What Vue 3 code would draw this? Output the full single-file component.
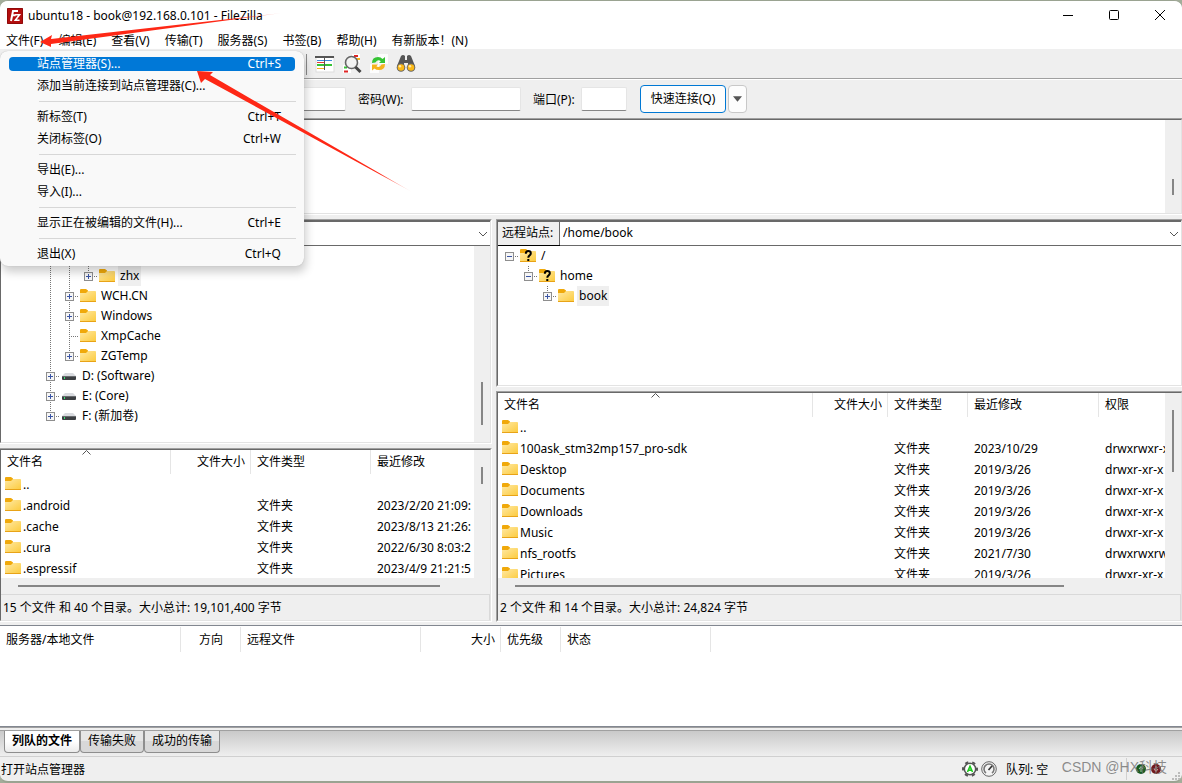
<script setup>
import { ref } from 'vue'

const menus = ['文件(F)', '编辑(E)', '查看(V)', '传输(T)', '服务器(S)', '书签(B)', '帮助(H)', '有新版本！(N)']

const fileMenu = [
  { label: '站点管理器(S)...', key: 'Ctrl+S', active: true },
  { label: '添加当前连接到站点管理器(C)...' },
  { sep: true },
  { label: '新标签(T)', key: 'Ctrl+T' },
  { label: '关闭标签(O)', key: 'Ctrl+W' },
  { sep: true },
  { label: '导出(E)...' },
  { label: '导入(I)...' },
  { sep: true },
  { label: '显示正在被编辑的文件(H)...', key: 'Ctrl+E' },
  { sep: true },
  { label: '退出(X)', key: 'Ctrl+Q' },
]

// Each guide cell: '' empty, 'line' passes through, 'up' ends here, 'both' continues, 'start' has nothing above
const localTree = [
  { name: 'zhx', icon: 'folder', box: '+', cells: ['', '', 'line', 'line', 'up'], selected: true },
  { name: 'WCH.CN', icon: 'folder', box: '+', cells: ['', '', 'line', 'both'] },
  { name: 'Windows', icon: 'folder', box: '+', cells: ['', '', 'line', 'both'] },
  { name: 'XmpCache', icon: 'folder', box: '', cells: ['', '', 'line', 'both'] },
  { name: 'ZGTemp', icon: 'folder', box: '+', cells: ['', '', 'line', 'up'] },
  { name: 'D: (Software)', icon: 'drive', box: '+', cells: ['', '', 'both'] },
  { name: 'E: (Core)', icon: 'drive', box: '+', cells: ['', '', 'both'] },
  { name: 'F: (新加卷)', icon: 'drive', box: '+', cells: ['', '', 'up'] },
]
const remoteTree = [
  { name: '/', icon: 'unknown', box: '-', cells: ['start'] },
  { name: 'home', icon: 'unknown', box: '-', cells: ['', 'up'] },
  { name: 'book', icon: 'folder', box: '+', cells: ['', '', 'up'], selected: true },
]
const trees = { local: localTree, remote: remoteTree }

const localFiles = [
  ['..', '', '', ''],
  ['.android', '', '文件夹', '2023/2/20 21:09:'],
  ['.cache', '', '文件夹', '2023/8/13 21:26:'],
  ['.cura', '', '文件夹', '2022/6/30 8:03:2'],
  ['.espressif', '', '文件夹', '2023/4/9 21:21:5'],
]
const remoteFiles = [
  ['..', '', '', '', ''],
  ['100ask_stm32mp157_pro-sdk', '', '文件夹', '2023/10/29', 'drwxrwxr-x'],
  ['Desktop', '', '文件夹', '2019/3/26', 'drwxr-xr-x'],
  ['Documents', '', '文件夹', '2019/3/26', 'drwxr-xr-x'],
  ['Downloads', '', '文件夹', '2019/3/26', 'drwxr-xr-x'],
  ['Music', '', '文件夹', '2019/3/26', 'drwxr-xr-x'],
  ['nfs_rootfs', '', '文件夹', '2021/7/30', 'drwxrwxrw'],
  ['Pictures', '', '文件夹', '2019/3/26', 'drwxr-xr-x'],
]

const sides = [
  {
    id: 'local', label: '', path: '', aria: '本地站点', files: localFiles,
    heads: ['文件名', '文件大小', '文件类型', '最近修改'],
    status: '15 个文件 和 40 个目录。大小总计: 19,101,400 字节',
  },
  {
    id: 'remote', label: '远程站点:', path: '/home/book', aria: '远程站点', files: remoteFiles,
    heads: ['文件名', '文件大小', '文件类型', '最近修改', '权限'],
    status: '2 个文件 和 14 个目录。大小总计: 24,824 字节',
  },
]

const queueHeads = ['服务器/本地文件', '方向', '远程文件', '大小', '优先级', '状态']
const tabs = ['列队的文件', '传输失败', '成功的传输']
const tab = ref(0)
const user = ref('')
const password = ref('')
const port = ref('')
</script>

<template>
  <div class="window" lang="zh-CN">
    <svg class="defs" aria-hidden="true">
      <defs>
        <linearGradient id="fold" x1="0" y1="0" x2="1" y2="1">
          <stop offset="0" stop-color="#ffe9a4" />
          <stop offset="1" stop-color="#fccb3f" />
        </linearGradient>
        <symbol id="folder" viewBox="0 0 16 16">
          <path d="M0 3V2.2Q0 1 1 1H6L8 2.6V5H0Z" fill="#f0a90b" />
          <path d="M0 5H6L8 3H15.2Q16 3 16 4V13.2H0Z" fill="url(#fold)" />
          <path d="M0 13H16V14H0Z" fill="#e8a317" />
        </symbol>
        <symbol id="unknown" viewBox="0 0 16 16">
          <use href="#folder" />
          <path d="M5.8 5.8Q5.8 3 8.3 3Q10.8 3 10.8 5.3Q10.8 6.7 9.4 7.6Q8.3 8.4 8.3 9.7M8.3 11V13" fill="none" stroke="#000" stroke-width="2" />
        </symbol>
        <symbol id="drive" viewBox="0 0 16 16">
          <path d="M4 5H12L15 8H1Z" fill="#d9dbdf" />
          <rect x="1" y="8" width="14" height="4" rx="1" fill="#3c3f42" />
          <rect x="1" y="8" width="14" height="1" fill="#686b6e" />
          <rect x="3" y="9" width="1" height="2" fill="#39df70" />
        </symbol>
      </defs>
    </svg>

    <header class="title">
      <svg class="logo" viewBox="0 0 16 16" aria-hidden="true">
        <rect width="16" height="16" rx="1" fill="#b30e0e" />
        <rect x=".5" y=".5" width="15" height="15" fill="none" stroke="#6f0505" stroke-dasharray="1 1" />
        <path d="M4 13L6 3H11M5 7.2H8.6" fill="none" stroke="#fff" stroke-width="2" />
        <path d="M8 6.7H12.5L8.3 12.3H12.6" fill="none" stroke="#fff" stroke-width="1.6" />
      </svg>
      <h1>ubuntu18 - book@192.168.0.101 - FileZilla</h1>
      <button class="win" aria-label="最小化"><svg viewBox="0 0 12 12"><path d="M1 6.5H11" /></svg></button>
      <button class="win" aria-label="最大化"><svg viewBox="0 0 12 12"><rect x="1.5" y="1.5" width="9" height="9" rx="1" /></svg></button>
      <button class="win" aria-label="关闭"><svg viewBox="0 0 12 12"><path d="M1 1L11 11M11 1L1 11" /></svg></button>
    </header>

    <nav class="menubar">
      <button v-for="m in menus" :key="m">{{ m }}</button>
      <div class="popup" role="menu">
        <template v-for="(it, i) in fileMenu" :key="i">
          <hr v-if="it.sep">
          <button v-else class="item" role="menuitem" :class="{ active: it.active }">
            <span class="inner"><span>{{ it.label }}</span><span>{{ it.key }}</span></span>
          </button>
        </template>
      </div>
    </nav>

    <div class="toolbar">
      <button aria-label="目录对比">
        <svg viewBox="0 0 20 20">
          <rect x="1" y="3" width="18" height="15" fill="#fff" stroke="#ddd" />
          <rect x="0" y="2" width="19" height="2" fill="#555" />
          <rect x="9" y="3" width="1" height="13" fill="#555" />
          <path d="M2 6.5H9M10 6.5H17" stroke="#3d8be0" />
          <path d="M2 8.5H9" stroke="#e23c3c" />
          <path d="M2 11H9M10 11H17" stroke="#36c236" stroke-width="2" />
          <path d="M2 14.5H9" stroke="#f5b31d" />
        </svg>
      </button>
      <button aria-label="文件名过滤">
        <svg viewBox="0 0 20 20">
          <path d="M10 0H18V9H10ZM1 11H9V19H1Z" fill="#fff" />
          <path d="M12 2H16" stroke="#e02626" stroke-width="2" />
          <path d="M14 5H18" stroke="#f5b31d" stroke-width="2" />
          <path d="M2 13.5H5" stroke="#36c236" stroke-width="2" />
          <path d="M2 17.5H6" stroke="#e02626" stroke-width="2" />
          <circle cx="9.5" cy="8.5" r="6" fill="#f3f3f3" fill-opacity=".9" stroke="#666" stroke-width="1.6" />
          <path d="M13.5 13L18.5 18" stroke="#444" stroke-width="3" />
        </svg>
      </button>
      <button aria-label="刷新">
        <svg viewBox="0 0 20 20">
          <path d="M9 0H19V10H9ZM1 10H10V19H1Z" fill="#fdfdfd" />
          <path d="M3 9Q3 3 9 3Q12 3 13.5 5L16 3V9H10L11.8 7.3Q9 4.8 6.4 8.5Z" fill="#35c435" />
          <path d="M16 10Q16 16 10 16Q7 16 5.5 14.5L3 16.5V10.5H9L7.4 12.3Q10 14.5 12.5 10.5Z" fill="#f5b31d" />
        </svg>
      </button>
      <button aria-label="查找">
        <svg viewBox="0 0 20 20">
          <path d="M5 2Q7 0 9 2V6H11V2Q13 0 15 2L19 12H12V9H8V12H1Z" fill="#555" />
          <circle cx="5" cy="13.5" r="4.3" fill="#666" />
          <circle cx="15" cy="13.5" r="4.3" fill="#666" />
          <circle cx="5" cy="13.5" r="3.3" fill="#fbb917" />
          <circle cx="15" cy="13.5" r="3.3" fill="#fbb917" />
          <circle cx="4" cy="12.3" r="1.2" fill="#ffe9a8" />
          <circle cx="14" cy="12.3" r="1.2" fill="#ffe9a8" />
        </svg>
      </button>
    </div>

    <form class="quick" @submit.prevent>
      <input v-model="user" class="wide" aria-label="用户名">
      <label for="pw">密码(W):</label>
      <input id="pw" v-model="password" class="wide" type="password">
      <label for="port">端口(P):</label>
      <input id="port" v-model="port" class="narrow">
      <button class="connect">快速连接(Q)</button>
      <button class="drop" type="button" aria-label="历史记录"><svg viewBox="0 0 10 6"><path d="M0 0H10L5 6Z" fill="#555" /></svg></button>
    </form>

    <section class="pane log">
      <div class="sunken">
        <div class="view"></div>
        <div class="vbar"><i class="thumb"></i></div>
      </div>
    </section>

    <main class="sides">
      <div v-for="s in sides" :key="s.id" class="side" :class="s.id">
        <section class="pane site">
          <div class="sunken col">
            <div class="sitebar">
              <label v-if="s.label" :for="s.id + '-path'">{{ s.label }}</label>
              <div class="combo">
                <select :id="s.id + '-path'" :aria-label="s.aria"><option>{{ s.path }}</option></select>
                <svg viewBox="0 0 10 6" aria-hidden="true"><path d="M1 1L5 5L9 1" fill="none" stroke="#555" /></svg>
              </div>
            </div>
            <div class="treebox">
              <ul class="tree">
                <li v-for="n in trees[s.id]" :key="n.name">
                  <span v-for="(c, i) in n.cells" :key="i" class="cell" :class="[c, { node: i === n.cells.length - 1 }]">
                    <svg v-if="n.box && i === n.cells.length - 1" class="box" viewBox="0 0 9 9" aria-hidden="true">
                      <rect x=".5" y=".5" width="8" height="8" fill="#f6f6f6" stroke="#8e8e8e" />
                      <path d="M2 4.5H7" stroke="#3b55a4" />
                      <path v-if="n.box === '+'" d="M4.5 2V7" stroke="#3b55a4" />
                    </svg>
                  </span>
                  <svg class="ico"><use :href="'#' + n.icon" /></svg>
                  <span class="name" :class="{ selected: n.selected }">{{ n.name }}</span>
                </li>
              </ul>
              <div v-if="s.id === 'local'" class="vbar"><i class="thumb"></i></div>
            </div>
          </div>
        </section>

        <section class="pane list">
          <div class="sunken col">
            <div class="listbox">
              <div class="view">
                <svg class="sort" viewBox="0 0 9 5" aria-hidden="true"><path d="M.5 4.5L4.5 .5L8.5 4.5" fill="none" stroke="#555" /></svg>
                <table class="files">
                  <thead>
                    <tr><th v-for="h in s.heads" :key="h">{{ h }}</th></tr>
                  </thead>
                  <tbody>
                    <tr v-for="f in s.files" :key="f[0]">
                      <td v-for="(v, i) in f" :key="i"><span class="entry"><svg v-if="i === 0" class="ico"><use href="#folder" /></svg>{{ v }}</span></td>
                    </tr>
                  </tbody>
                </table>
              </div>
              <div class="vbar"><i class="thumb"></i></div>
            </div>
            <div class="hbar"><i class="thumb"></i></div>
            <footer class="liststatus">{{ s.status }}</footer>
          </div>
        </section>
      </div>
    </main>

    <section class="queue">
      <table>
        <thead><tr><th v-for="h in queueHeads" :key="h">{{ h }}</th></tr></thead>
      </table>
    </section>

    <div class="tabs" role="tablist">
      <button v-for="(t, i) in tabs" :key="t" role="tab" :aria-selected="tab === i" :class="{ on: tab === i }" @click="tab = i">{{ t }}</button>
    </div>

    <footer class="status">
      <span class="msg">打开站点管理器</span>
      <svg class="ico" viewBox="0 0 16 16" aria-hidden="true">
        <circle cx="8" cy="8" r="7" fill="none" stroke="#555" stroke-width="2" stroke-dasharray="3.3 4.03" stroke-dashoffset="1.6" />
        <circle cx="8" cy="8" r="5.7" fill="#fff" stroke="#555" stroke-width="1.6" />
        <path d="M5.5 11L8 5.3L10.5 11M6.4 9.3H9.6" fill="none" stroke="#1cc91c" stroke-width="1.6" />
      </svg>
      <svg class="ico" viewBox="0 0 16 16" aria-hidden="true">
        <circle cx="8" cy="8" r="7.3" fill="#f4f4f4" stroke="#666" />
        <path d="M5 12A5 5 0 1 1 11 12" fill="none" stroke="#777" stroke-width="1.6" />
        <path d="M7.5 9L11 5" stroke="#333" stroke-width="1.6" />
      </svg>
      <span class="qtext">队列: 空</span>
      <span class="leds">
        <svg viewBox="0 0 10 10"><circle cx="5" cy="5" r="5" fill="#15591d" /><path d="M5 8V3M3 5L5 2.5L7 5" stroke="#a7d9a7" fill="none" /></svg>
        <svg viewBox="0 0 10 10"><circle cx="5" cy="5" r="5" fill="#71191d" /><path d="M5 2V7M3 5L5 7.5L7 5" stroke="#d9a0a0" fill="none" /></svg>
        <span class="mark">CSDN @HX科技</span>
      </span>
      <svg class="grip" viewBox="0 0 9 9" aria-hidden="true"><path d="M6 0h2v2H6zM3 3h2v2H3zM6 3h2v2H6zM0 6h2v2H0zM3 6h2v2H3zM6 6h2v2H6z" fill="#bbb" /></svg>
    </footer>

    <svg class="arrows" viewBox="0 0 420 200" aria-hidden="true">
      <defs>
        <linearGradient id="a1" gradientUnits="userSpaceOnUse" x1="230" y1="0" x2="290" y2="0">
          <stop offset="0" stop-color="#fe2816" /><stop offset="1" stop-color="#fe2816" stop-opacity="0" />
        </linearGradient>
        <linearGradient id="a2" gradientUnits="userSpaceOnUse" x1="380" y1="175" x2="415" y2="193">
          <stop offset="0" stop-color="#fe2816" /><stop offset="1" stop-color="#fe2816" stop-opacity="0" />
        </linearGradient>
      </defs>
      <path d="M40 42L52 35L51 39L282 13L51 44L51 47Z" fill="url(#a1)" />
      <path d="M197 71L213 72L210 75L412 192L205 79L201 83Z" fill="url(#a2)" />
    </svg>
  </div>
</template>

<style>
body { background: #a3ad9a; }
</style>

<style scoped>
* { box-sizing: border-box; }
.window {
  position: relative;
  display: flex;
  flex-direction: column;
  height: 100vh;
  min-height: 640px;
  overflow: hidden;
  background: #efefef;
  border-top: 1px solid #9aa391;
  border-bottom: 2px solid #9aa391;
  border-radius: 8px;
  color: #000;
  font: 12px/16px "Noto Sans", "Noto Sans CJK SC", sans-serif;
  white-space: nowrap;
}
button, input, select { font: inherit; color: inherit; margin: 0; padding: 0; border: 0; background: none; border-radius: 0; outline: 0; }
.defs { position: absolute; width: 0; height: 0; }
.ico { width: 16px; height: 16px; flex: none; }

.title { display: flex; align-items: center; height: 30px; flex: none; background: #fff; padding-left: 7px; }
.logo { width: 16px; height: 16px; margin-right: 5px; }
.title h1 { flex: 1; margin: 0; font-size: 12px; font-weight: 400; }
.win { display: flex; justify-content: center; width: 46px; height: 28px; padding: 7px 0 0 2px; }
.win svg { width: 12px; height: 12px; fill: none; stroke: #000; }

.menubar { position: relative; display: flex; height: 18px; flex: none; background: #fff; z-index: 2; }
.menubar > button { padding: 2px 9px 0 6px; }
.popup {
  position: absolute; left: 0; top: 20px; width: 304px; padding: 2px 8px 1px;
  background: #f9f9f9; border-radius: 8px; box-shadow: 0 0 1px #aaa, 2px 6px 10px rgba(0, 0, 0, .2);
}
.item { display: flex; align-items: center; width: 100%; height: 22px; padding: 0 1px; }
.inner { display: flex; justify-content: space-between; align-items: center; flex: 1; height: 14px; padding: 0 14px 0 28px; border-radius: 4px; }
.active .inner { background: #0078d7; color: #fff; }
.popup hr { height: 1px; margin: 4px 0 4px 31px; border: 0; background: #d7d7d7; }

.toolbar { display: flex; align-items: center; gap: 8px; height: 31px; flex: none; padding-left: 306px; border-bottom: 1px solid #fff; box-shadow: inset 0 -1px #a0a0a0; }
.toolbar::before { content: ""; width: 1px; height: 21px; background: #8a8a8a; }
.toolbar button { width: 19px; height: 20px; }
.toolbar svg { display: block; width: 20px; height: 20px; }

.quick { display: flex; align-items: center; height: 38px; flex: none; padding-left: 236px; }
.quick input { height: 24px; background: #fff; border: 1px solid #e5e5e5; border-bottom-color: #868686; border-radius: 2px; }
.wide { width: 110px; }
.quick label { width: 65px; padding: 1px 0 0 12px; }
.quick label[for="port"] { width: 60px; }
.narrow { width: 46px; }
.connect { width: 86px; height: 28px; margin-left: 13px; background: #fdfdfd; border: 1px solid #0078d4; border-radius: 4px; }
.drop { display: flex; justify-content: center; align-items: center; width: 19px; height: 28px; margin-left: 2px; background: #fdfdfd; border: 1px solid #c8c8c8; border-radius: 4px; }
.drop svg { width: 9px; height: 6px; }

.pane { display: flex; min-width: 0; min-height: 0; border: 0 solid #a0a0a0; border-top-width: 1px; border-bottom: 1px solid #fff; }
.sunken { display: flex; flex: 1; min-width: 0; min-height: 0; border: 1px solid #696969; border-right-color: #e3e3e3; border-bottom-color: #e3e3e3; }
.col { flex-direction: column; }
.view { position: relative; flex: 1; min-width: 0; overflow: hidden; background: #fff; }
.vbar { width: 16px; flex: none; background: #efefef; }
.vbar .thumb { display: block; width: 2px; margin-left: 7px; background: #868686; }
.log { height: 97px; flex: none; }
.log .thumb { height: 16px; margin-top: 59px; }

.sides { display: grid; grid-template-columns: 492fr 686fr; gap: 4px; flex: 1; min-height: 0; margin: 4px 0 3px; }
.side { display: grid; gap: 4px; min-width: 0; min-height: 0; }
.local { grid-template-rows: 225fr 174fr; }
.remote { grid-template-rows: 168fr 231fr; }
.local .pane { border-right: 1px solid #fff; }
.remote .pane { border-left-width: 1px; }

.sitebar { display: flex; height: 25px; flex: none; border-top: 1px solid #696969; border-bottom: 1px solid #696969; background: #fff; }
.sitebar label { width: 62px; padding: 3px 0 0 4px; background: #efefef; border-right: 1px solid #696969; box-shadow: 0 1px #000; }
.combo { position: relative; display: flex; flex: 1; }
.combo select { flex: 1; appearance: none; padding: 0 20px 2px 3px; }
.combo svg { position: absolute; right: 2px; top: 9px; width: 10px; height: 6px; pointer-events: none; }
.treebox { display: flex; flex: 1; min-height: 0; overflow: hidden; background: #fff; }
.tree { flex: 1; margin: 0; padding: 0 0 0 2px; list-style: none; }
.local .tree { padding-top: 20px; }
.local .treebox .thumb { height: 43px; margin-top: 136px; }
.tree li { display: flex; align-items: center; height: 20px; }
.cell { position: relative; display: flex; align-items: center; justify-content: center; width: 19px; height: 20px; flex: none; }
.cell::before { content: ""; position: absolute; left: 9px; top: 0; width: 1px; height: 0; background: repeating-linear-gradient(#777 0 1px, transparent 1px 2px); }
.line::before, .both::before { height: 20px; }
.up::before { height: 10px; }
.node::after { content: ""; position: absolute; left: 9px; right: 0; top: 10px; height: 1px; background: repeating-linear-gradient(90deg, #777 0 1px, transparent 1px 2px); }
.box { position: relative; z-index: 1; width: 9px; height: 9px; margin-top: 1px; }
.tree .ico { margin: 0 3px 0 1px; }
.name { height: 20px; padding: 2px; }
.selected { background: #efefef; }

.listbox { display: flex; flex: 1; min-height: 0; }
.sort { position: absolute; top: 0; left: 81px; width: 9px; height: 5px; }
.remote .sort { left: 153px; }
table { table-layout: fixed; border-collapse: separate; border-spacing: 0; }
th, td { padding: 0; font-weight: 400; text-align: left; overflow: hidden; }
th { height: 24px; padding: 0 5px 0 6px; border-right: 1px solid #e5e5e5; }
.files { width: 520px; }
.remote .files { width: 721px; }
.files th:nth-child(1) { width: 170px; }
.files th:nth-child(2) { width: 80px; text-align: right; }
.files th:nth-child(3) { width: 120px; }
.files th:nth-child(4) { width: 150px; }
.remote .files th:nth-child(1) { width: 315px; }
.remote .files th:nth-child(2) { width: 75px; }
.remote .files th:nth-child(3) { width: 80px; }
.remote .files th:nth-child(4) { width: 131px; }
.remote .files th:nth-child(5) { width: 120px; }
.files td { height: 21px; padding-left: 6px; }
.files td:first-child { padding-left: 4px; }
.entry { display: flex; align-items: center; height: 21px; gap: 2px; }
.entry .ico { margin-bottom: 2px; }
.local .list .vbar .thumb { height: 17px; margin-top: 17px; }
.remote .list .vbar .thumb { height: 62px; margin-top: 17px; }
.hbar { height: 16px; flex: none; padding: 7px 50px 0 17px; }
.remote .hbar { padding-right: 117px; }
.hbar .thumb { display: block; height: 2px; background: #868686; }
.liststatus { height: 26px; flex: none; padding: 5px 2px 0; border-top: 1px solid #d9d9d9; box-shadow: inset -1px 0 #d9d9d9; }

.queue { height: 103px; flex: none; background: #fff; border-top: 1px solid #828790; border-bottom: 1px solid #a0a0a0; box-shadow: inset 0 -1px #828790; padding-top: 1px; }
.queue table { width: 711px; }
.queue th { height: 25px; }
.queue th:nth-child(1) { width: 181px; }
.queue th:nth-child(2) { width: 60px; text-align: center; }
.queue th:nth-child(3) { width: 180px; }
.queue th:nth-child(4) { width: 80px; text-align: right; }
.queue th:nth-child(5) { width: 60px; }
.queue th:nth-child(6) { width: 150px; }

.tabs { display: flex; align-items: flex-start; height: 26px; flex: none; margin-top: 2px; padding-left: 4px; border-top: 1px solid #a0a0a0; background: linear-gradient(#c9c9c9, #efefef); }
.tabs button { height: 22px; padding: 0 7px 2px; border: 1px solid #8e8e8e; border-top: 0; border-radius: 0 0 4px 4px; background: linear-gradient(#e6e6e6 50%, #d8d8d8 50%); }
.tabs .on { background: linear-gradient(#fff 50%, #ebebeb); font-weight: 700; }

.status { display: flex; align-items: center; height: 25px; flex: none; padding-left: 1px; border-top: 1px solid #d0d0d0; }
.msg { flex: 1; padding-top: 1px; }
.status > .ico { margin-right: 3px; }
.qtext { margin-left: 6px; padding-top: 1px; width: 120px; }
.leds { position: relative; display: flex; align-items: center; gap: 5px; width: 46px; height: 22px; padding-left: 9px; border-left: 1px solid #d0d0d0; }
.leds svg { width: 10px; height: 10px; }
.mark { position: absolute; right: 5px; top: 1px; color: rgba(120, 120, 120, .85); font: 14px/16px "Liberation Sans", "Noto Sans CJK SC", sans-serif; }
.grip { width: 9px; height: 9px; align-self: flex-end; margin-right: 1px; }
.arrows { position: absolute; left: 0; top: -1px; width: 420px; height: 200px; z-index: 3; pointer-events: none; }
</style>
